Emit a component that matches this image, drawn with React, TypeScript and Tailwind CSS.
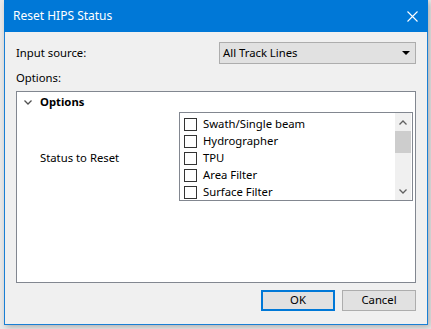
import React from 'react';

const items = ['Swath/Single beam', 'Hydrographer', 'TPU', 'Area Filter', 'Surface Filter'];

const font = { fontFamily: '"Noto Sans", "Open Sans", sans-serif' };

const App: React.FC = () => {
  return (
    <div className="w-[431px] h-[329px] bg-[#e9e9e9] overflow-hidden text-[11.3px] text-black" style={font}>
      <div className="ml-[4px] w-[424px] h-[325px] border border-[#1a7fd4] bg-[#f0f0f0] flex flex-col shadow-[2px_2px_6px_rgba(0,0,0,0.25)]">
        {/* title bar */}
        <div className="h-[32px] -mx-px -mt-px bg-[#0078d7] flex items-center justify-between pl-[9px] pr-[10px] text-white text-[12px]">
          <span>Reset HIPS Status</span>
          <svg width="11" height="11" viewBox="0 0 11 11">
            <path d="M0.5 0.5 L10.5 10.5 M10.5 0.5 L0.5 10.5" stroke="white" strokeWidth="1.1" />
          </svg>
        </div>

        <div className="flex-1 flex flex-col pl-[11px] pr-[11px] pt-[10px] pb-[12px]">
          {/* input source */}
          <div className="flex items-center justify-between h-[22px]">
            <span>Input source:</span>
            <div className="w-[197px] h-[22px] bg-[#e1e1e1] border border-[#adadad] flex items-center justify-between pl-[3px] pr-[5px]">
              <span>All Track Lines</span>
              <svg width="8" height="4" viewBox="0 0 8 4">
                <path d="M0 0 L8 0 L4 4 Z" fill="#000" />
              </svg>
            </div>
          </div>

          <div className="h-[27px] flex items-center pt-[2px]">Options:</div>

          {/* options panel */}
          <div className="h-[192px] bg-white border border-[#828790] flex flex-col">
            <div className="h-[18px] flex items-center pl-[7px] mt-px">
              <svg width="8" height="5" viewBox="0 0 8 5" className="mr-[8px]">
                <path d="M0.5 0.5 L4 4 L7.5 0.5" stroke="#505050" strokeWidth="1.3" fill="none" />
              </svg>
              <span className="font-bold">Options</span>
            </div>
            <div className="flex items-center mt-px">
              <span className="w-[162px] pl-[23px] pt-[3px]">Status to Reset</span>
              <div className="w-[234px] h-[89px] border border-[#828790] flex">
                <div className="flex-1 flex flex-col pl-[4px] pt-[3px]">
                  {items.map((t) => (
                    <div key={t} className="h-[17px] flex items-center">
                      <div className="w-[13px] h-[13px] border border-[#333333] bg-white mr-[6px]" />
                      <span>{t}</span>
                    </div>
                  ))}
                </div>
                <div className="w-[16px] bg-[#f0f0f0] flex flex-col items-center mr-px">
                  <div className="h-[18px] flex items-center justify-center">
                    <svg width="8" height="5" viewBox="0 0 8 5">
                      <path d="M0.5 4.5 L4 1 L7.5 4.5" stroke="#606060" strokeWidth="1.3" fill="none" />
                    </svg>
                  </div>
                  <div className="w-full h-[22px] bg-[#cdcdcd]" />
                  <div className="flex-1" />
                  <div className="h-[18px] flex items-center justify-center">
                    <svg width="8" height="5" viewBox="0 0 8 5">
                      <path d="M0.5 0.5 L4 4 L7.5 0.5" stroke="#606060" strokeWidth="1.3" fill="none" />
                    </svg>
                  </div>
                </div>
              </div>
            </div>
          </div>

          {/* buttons */}
          <div className="flex justify-end gap-[7px] mt-[7px]">
            <button className="w-[74px] h-[21px] bg-[#e1e1e1] border-2 border-[#0078d7] flex items-center justify-center">OK</button>
            <button className="w-[74px] h-[21px] bg-[#e1e1e1] border border-[#adadad] flex items-center justify-center">Cancel</button>
          </div>
        </div>
      </div>
    </div>
  );
};

export default App;
